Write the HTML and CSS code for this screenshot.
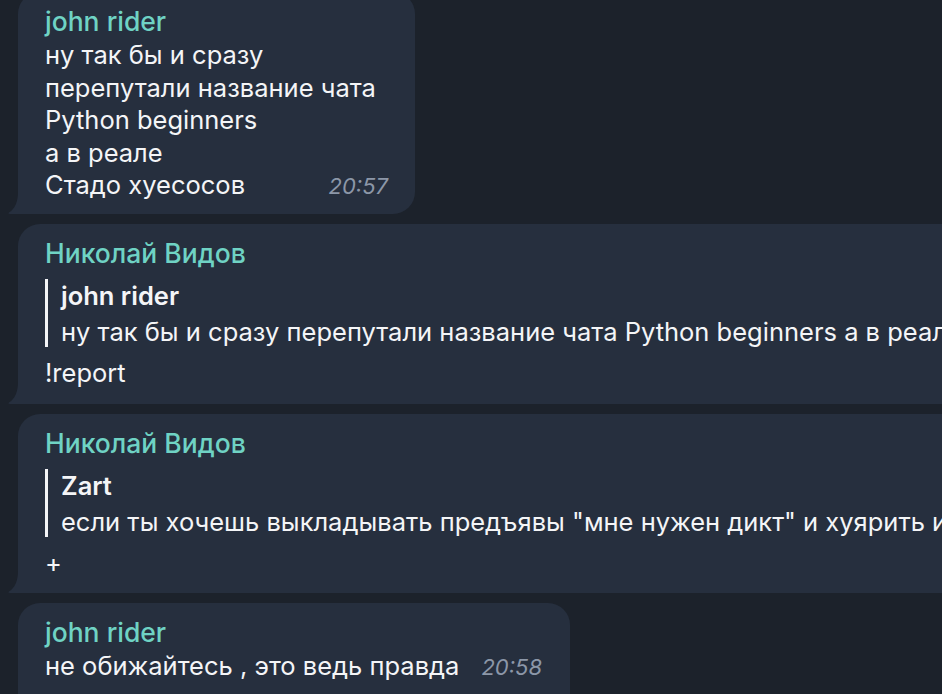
FILE: index.html
```html
<!DOCTYPE html>
<html lang="ru">
<head>
<meta charset="utf-8">
<link rel="stylesheet" href="styles.css">
</head>
<body>
<div class="chat">
  <div class="bubble b1">
    <div class="name">john rider</div>
    <div class="lines">
      <div class="line">ну так бы и сразу</div>
      <div class="line">перепутали название чата</div>
      <div class="line">Python beginners</div>
      <div class="line">а в реале</div>
    </div>
    <div class="last">
      <span class="line">Стадо хуесосов</span>
      <span class="time">20:57</span>
    </div>
    <svg class="tail" width="24" height="22" viewBox="0 0 24 22"><path d="M12 0 L24 0 L24 22 L4 22 Q1.5 22 3 20.6 C9 16.5 12 10 12 0 Z"/></svg>
  </div>

  <div class="bubble wide">
    <div class="name">Николай Видов</div>
    <div class="reply">
      <div class="rname">john rider</div>
      <div class="rtext">ну так бы и сразу перепутали название чата Python beginners а в реале Стадо хуесосов</div>
    </div>
    <div class="line">!report</div>
    <svg class="tail" width="24" height="22" viewBox="0 0 24 22"><path d="M12 0 L24 0 L24 22 L4 22 Q1.5 22 3 20.6 C9 16.5 12 10 12 0 Z"/></svg>
  </div>

  <div class="bubble wide">
    <div class="name">Николай Видов</div>
    <div class="reply">
      <div class="rname">Zart</div>
      <div class="rtext">если ты хочешь выкладывать предъявы "мне нужен дикт" и хуярить их сюда</div>
    </div>
    <div class="line">+</div>
    <svg class="tail" width="24" height="22" viewBox="0 0 24 22"><path d="M12 0 L24 0 L24 22 L4 22 Q1.5 22 3 20.6 C9 16.5 12 10 12 0 Z"/></svg>
  </div>

  <div class="bubble b4">
    <div class="name">john rider</div>
    <div class="last">
      <span class="line">не обижайтесь , это ведь правда</span>
      <span class="time">20:58</span>
    </div>
  </div>
</div>
</body>
</html>
```

FILE: styles.css
```css
html, body {
  margin: 0;
  padding: 0;
  background: #1c222b;
  overflow: hidden;
  width: 942px;
  height: 694px;
}

.chat {
  display: flex;
  flex-direction: column;
  align-items: flex-start;
  gap: 10px;
  margin-top: -8px;
  font-family: Inter, "Noto Sans", sans-serif;
  color: #f4f5f7;
}

.bubble {
  position: relative;
  margin-left: 18px;
  background: #262f3e;
  border-radius: 22px;
  border-bottom-left-radius: 4px;
  padding: 15px 27px 12px 27px;
  flex-shrink: 0;
}

.wide {
  width: 1000px;
  padding-bottom: 14px;
}

.b4 {
  border-bottom-left-radius: 22px;
  height: 120px;
  padding-right: 28px;
}

.tail {
  position: absolute;
  left: -12px;
  bottom: 0;
  fill: #262f3e;
}

.name {
  color: #6fd3c4;
  font-weight: 500;
  font-size: 26.5px;
  line-height: 28px;
  margin-bottom: 4px;
}

.line {
  font-size: 25.5px;
  line-height: 32.5px;
  white-space: nowrap;
}

.lines {
  padding-right: 12px;
}

.last {
  display: flex;
  justify-content: space-between;
  align-items: baseline;
  gap: 22px;
}

.time {
  font-size: 22px;
  font-style: italic;
  color: #8c97a8;
  line-height: 32px;
}

.reply {
  margin-top: 12px;
  margin-bottom: 10px;
  border-left: 3px solid #f4f5f7;
  padding-left: 13px;
}

.rname {
  font-weight: 600;
  font-size: 25.5px;
  line-height: 30px;
  padding-top: 2px;
  color: #f4f5f7;
}

.rtext {
  font-size: 25.5px;
  line-height: 30px;
  padding-top: 6px;
  white-space: nowrap;
}
```
